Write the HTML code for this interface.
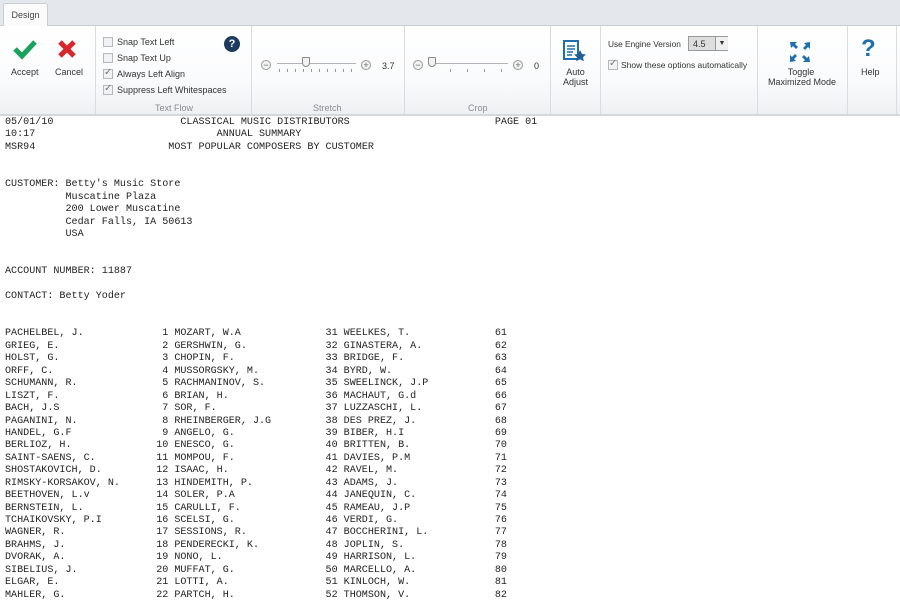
<!DOCTYPE html>
<html><head><meta charset="utf-8"><style>
*{margin:0;padding:0;box-sizing:border-box}
body{width:900px;height:602px;overflow:hidden;background:#fff;font-family:"Liberation Sans",sans-serif;font-size:9px;color:#333;position:relative}
.tabbar{position:absolute;left:0;top:0;width:900px;height:26px;background:#e4e7eb;border-bottom:1px solid #c9cdd2}
.tab{position:absolute;left:3px;top:3px;width:45px;height:24px;background:#fbfbfc;border:1px solid #c9cdd2;border-bottom:none;border-radius:3px 3px 0 0;font-size:9px;text-align:center;line-height:22px;color:#444}
.ribbon{position:absolute;left:0;top:26px;width:900px;height:90px;background:linear-gradient(#fff 0%,#fafbfc 60%,#eef0f2 100%);border-bottom:2px solid #d4d7db}
.sep{position:absolute;top:0;width:1px;height:88px;background:#d9dce0}
.a{position:absolute;white-space:nowrap}
.lbl{position:absolute;top:77px;color:#8a8d91;font-size:9px}
.cb{position:absolute;width:10px;height:10px;border:1px solid #b5b8bc;background:#f1f2f3}
.cb.on::after{content:"✓";position:absolute;left:0;top:-3px;font-size:10px;color:#777}
.circ{position:absolute;width:10px;height:10px;border:1px solid #999;border-radius:50%;background:#f2f2f2;font-size:9px;line-height:8px;text-align:center;color:#666}
.line{position:absolute;height:1px;background:#b0b3b7}
.ticks{position:absolute;height:3px;background:repeating-linear-gradient(90deg,#999 0 1px,transparent 1px 8px)}
.rep{position:absolute;left:5px;top:117px;font-family:"Liberation Mono",monospace;font-size:10.08px;line-height:12.45px;color:#222}
.rep div{height:12.45px;white-space:pre}
.rep b,.rep i{display:inline-block;font-weight:normal;font-style:normal;white-space:pre}
.rep b{width:25ch}
.rep i{width:2ch;text-align:right;margin-right:1ch}
</style></head><body>
<div class="tabbar"><div class="tab">Design</div></div>
<div class="ribbon">
 <svg class="a" style="left:13px;top:12px" width="24" height="22" viewBox="0 0 24 22"><path d="M2 11 L9 18 L22 4" stroke="#1aa35a" stroke-width="5" fill="none" stroke-linejoin="miter"/></svg>
 <div class="a" style="left:11px;top:41px">Accept</div>
 <svg class="a" style="left:57px;top:13px" width="20" height="20" viewBox="0 0 20 20"><path d="M3 3L17 17M17 3L3 17" stroke="#d8262c" stroke-width="5"/></svg>
 <div class="a" style="left:55px;top:41px">Cancel</div>
 <div class="sep" style="left:95px"></div>
 <div class="cb" style="left:103px;top:11px"></div><div class="a" style="left:117px;top:11px">Snap Text Left</div>
 <div class="cb" style="left:103px;top:27px"></div><div class="a" style="left:117px;top:27px">Snap Text Up</div>
 <div class="cb on" style="left:103px;top:43px"></div><div class="a" style="left:117px;top:43px">Always Left Align</div>
 <div class="cb on" style="left:103px;top:59px"></div><div class="a" style="left:117px;top:59px">Suppress Left Whitespaces</div>
 <div class="a" style="left:224px;top:10px;width:16px;height:16px;border-radius:50%;background:#1d3b5c;color:#fff;font-weight:bold;font-size:11px;text-align:center;line-height:16px">?</div>
 <div class="lbl" style="left:155px">Text Flow</div>
 <div class="sep" style="left:251px"></div>
 <div class="circ" style="left:261px;top:34px">−</div>
 <div class="line" style="left:277px;top:37px;width:79px"></div>
 <div class="ticks" style="left:279px;top:43px;width:76px"></div>
 <div class="a" style="left:302px;top:31px;width:8px;height:10px;border:1px solid #888;background:#f3f3f3;border-radius:1px 1px 4px 4px"></div>
 <div class="circ" style="left:361px;top:34px">+</div>
 <div class="a" style="left:382px;top:35px">3.7</div>
 <div class="lbl" style="left:313px">Stretch</div>
 <div class="sep" style="left:404px"></div>
 <div class="circ" style="left:413px;top:34px">−</div>
 <div class="line" style="left:428px;top:37px;width:80px"></div>
 <div class="ticks" style="left:450px;top:43px;width:60px;background:repeating-linear-gradient(90deg,#999 0 1px,transparent 1px 17px)"></div>
 <div class="a" style="left:428px;top:31px;width:8px;height:10px;border:1px solid #888;background:#f3f3f3;border-radius:1px 1px 4px 4px"></div>
 <div class="circ" style="left:513px;top:34px">+</div>
 <div class="a" style="left:534px;top:35px">0</div>
 <div class="lbl" style="left:468px">Crop</div>
 <div class="sep" style="left:550px"></div>
 <svg class="a" style="left:563px;top:14px" width="24" height="22" viewBox="0 0 24 22"><rect x="1" y="1" width="14" height="18" fill="#fff" stroke="#1e6fb0" stroke-width="2"/><path d="M4 6h8M4 9h8M4 12h6M4 15h5" stroke="#1e6fb0" stroke-width="1.4"/><path d="M17 10l2 4 4 .5-3 2.8.8 4-3.8-2-3.8 2 .8-4-3-2.8 4-.5z" fill="#1e5f9a"/></svg>
 <div class="a" style="left:563px;top:41px;text-align:center;line-height:10px">Auto<br>Adjust</div>
 <div class="sep" style="left:600px"></div>
 <div class="a" style="left:608px;top:13px;font-size:8.3px">Use Engine Version</div>
 <div class="a" style="left:688px;top:10px;width:40px;height:15px;border:1px solid #999;background:#ddd"><span style="position:absolute;left:4px;top:2px">4.5</span><span style="position:absolute;left:26px;top:0;width:13px;height:13px;border-left:1px solid #999;background:#eee;font-size:7px;text-align:center;line-height:13px">▼</span></div>
 <div class="cb on" style="left:608px;top:34px"></div><div class="a" style="left:621px;top:34px;font-size:8.5px">Show these options automatically</div>
 <div class="sep" style="left:757px"></div>
 <svg class="a" style="left:789px;top:15px" width="22" height="22" viewBox="0 0 22 22" fill="#1e6fb0"><path d="M1 1h7l-2 2 3 3-2 2-3-3-2 2zM21 1v7l-2-2-3 3-2-2 3-3-2-2zM1 21v-7l2 2 3-3 2 2-3 3 2 2zM21 21h-7l2-2-3-3 2-2 3 3 2-2z"/></svg>
 <div class="a" style="left:768px;top:41px;width:66px;text-align:center;line-height:10px">Toggle<br>Maximized Mode</div>
 <div class="sep" style="left:847px"></div>
 <div class="a" style="left:861px;top:11px;font-size:24px;font-weight:bold;color:#1e6fb0;line-height:24px">?</div>
 <div class="a" style="left:861px;top:41px">Help</div>
 <div class="sep" style="left:896px"></div>
</div>
<div class="rep"><div>05/01/10                     CLASSICAL MUSIC DISTRIBUTORS                        PAGE 01</div><div>10:17                              ANNUAL SUMMARY</div><div>MSR94                      MOST POPULAR COMPOSERS BY CUSTOMER</div><div></div><div></div><div>CUSTOMER: Betty's Music Store</div><div>          Muscatine Plaza</div><div>          200 Lower Muscatine</div><div>          Cedar Falls, IA 50613</div><div>          USA</div><div></div><div></div><div>ACCOUNT NUMBER: 11887</div><div></div><div>CONTACT: Betty Yoder</div><div></div><div></div>
<div><b>PACHELBEL, J.</b><i>1</i><b>MOZART, W.A</b><i>31</i><b>WEELKES, T.</b><i>61</i></div>
<div><b>GRIEG, E.</b><i>2</i><b>GERSHWIN, G.</b><i>32</i><b>GINASTERA, A.</b><i>62</i></div>
<div><b>HOLST, G.</b><i>3</i><b>CHOPIN, F.</b><i>33</i><b>BRIDGE, F.</b><i>63</i></div>
<div><b>ORFF, C.</b><i>4</i><b>MUSSORGSKY, M.</b><i>34</i><b>BYRD, W.</b><i>64</i></div>
<div><b>SCHUMANN, R.</b><i>5</i><b>RACHMANINOV, S.</b><i>35</i><b>SWEELINCK, J.P</b><i>65</i></div>
<div><b>LISZT, F.</b><i>6</i><b>BRIAN, H.</b><i>36</i><b>MACHAUT, G.d</b><i>66</i></div>
<div><b>BACH, J.S</b><i>7</i><b>SOR, F.</b><i>37</i><b>LUZZASCHI, L.</b><i>67</i></div>
<div><b>PAGANINI, N.</b><i>8</i><b>RHEINBERGER, J.G</b><i>38</i><b>DES PREZ, J.</b><i>68</i></div>
<div><b>HANDEL, G.F</b><i>9</i><b>ANGELO, G.</b><i>39</i><b>BIBER, H.I</b><i>69</i></div>
<div><b>BERLIOZ, H.</b><i>10</i><b>ENESCO, G.</b><i>40</i><b>BRITTEN, B.</b><i>70</i></div>
<div><b>SAINT-SAENS, C.</b><i>11</i><b>MOMPOU, F.</b><i>41</i><b>DAVIES, P.M</b><i>71</i></div>
<div><b>SHOSTAKOVICH, D.</b><i>12</i><b>ISAAC, H.</b><i>42</i><b>RAVEL, M.</b><i>72</i></div>
<div><b>RIMSKY-KORSAKOV, N.</b><i>13</i><b>HINDEMITH, P.</b><i>43</i><b>ADAMS, J.</b><i>73</i></div>
<div><b>BEETHOVEN, L.v</b><i>14</i><b>SOLER, P.A</b><i>44</i><b>JANEQUIN, C.</b><i>74</i></div>
<div><b>BERNSTEIN, L.</b><i>15</i><b>CARULLI, F.</b><i>45</i><b>RAMEAU, J.P</b><i>75</i></div>
<div><b>TCHAIKOVSKY, P.I</b><i>16</i><b>SCELSI, G.</b><i>46</i><b>VERDI, G.</b><i>76</i></div>
<div><b>WAGNER, R.</b><i>17</i><b>SESSIONS, R.</b><i>47</i><b>BOCCHERINI, L.</b><i>77</i></div>
<div><b>BRAHMS, J.</b><i>18</i><b>PENDERECKI, K.</b><i>48</i><b>JOPLIN, S.</b><i>78</i></div>
<div><b>DVORAK, A.</b><i>19</i><b>NONO, L.</b><i>49</i><b>HARRISON, L.</b><i>79</i></div>
<div><b>SIBELIUS, J.</b><i>20</i><b>MUFFAT, G.</b><i>50</i><b>MARCELLO, A.</b><i>80</i></div>
<div><b>ELGAR, E.</b><i>21</i><b>LOTTI, A.</b><i>51</i><b>KINLOCH, W.</b><i>81</i></div>
<div><b>MAHLER, G.</b><i>22</i><b>PARTCH, H.</b><i>52</i><b>THOMSON, V.</b><i>82</i></div>
</div>
</body></html>
